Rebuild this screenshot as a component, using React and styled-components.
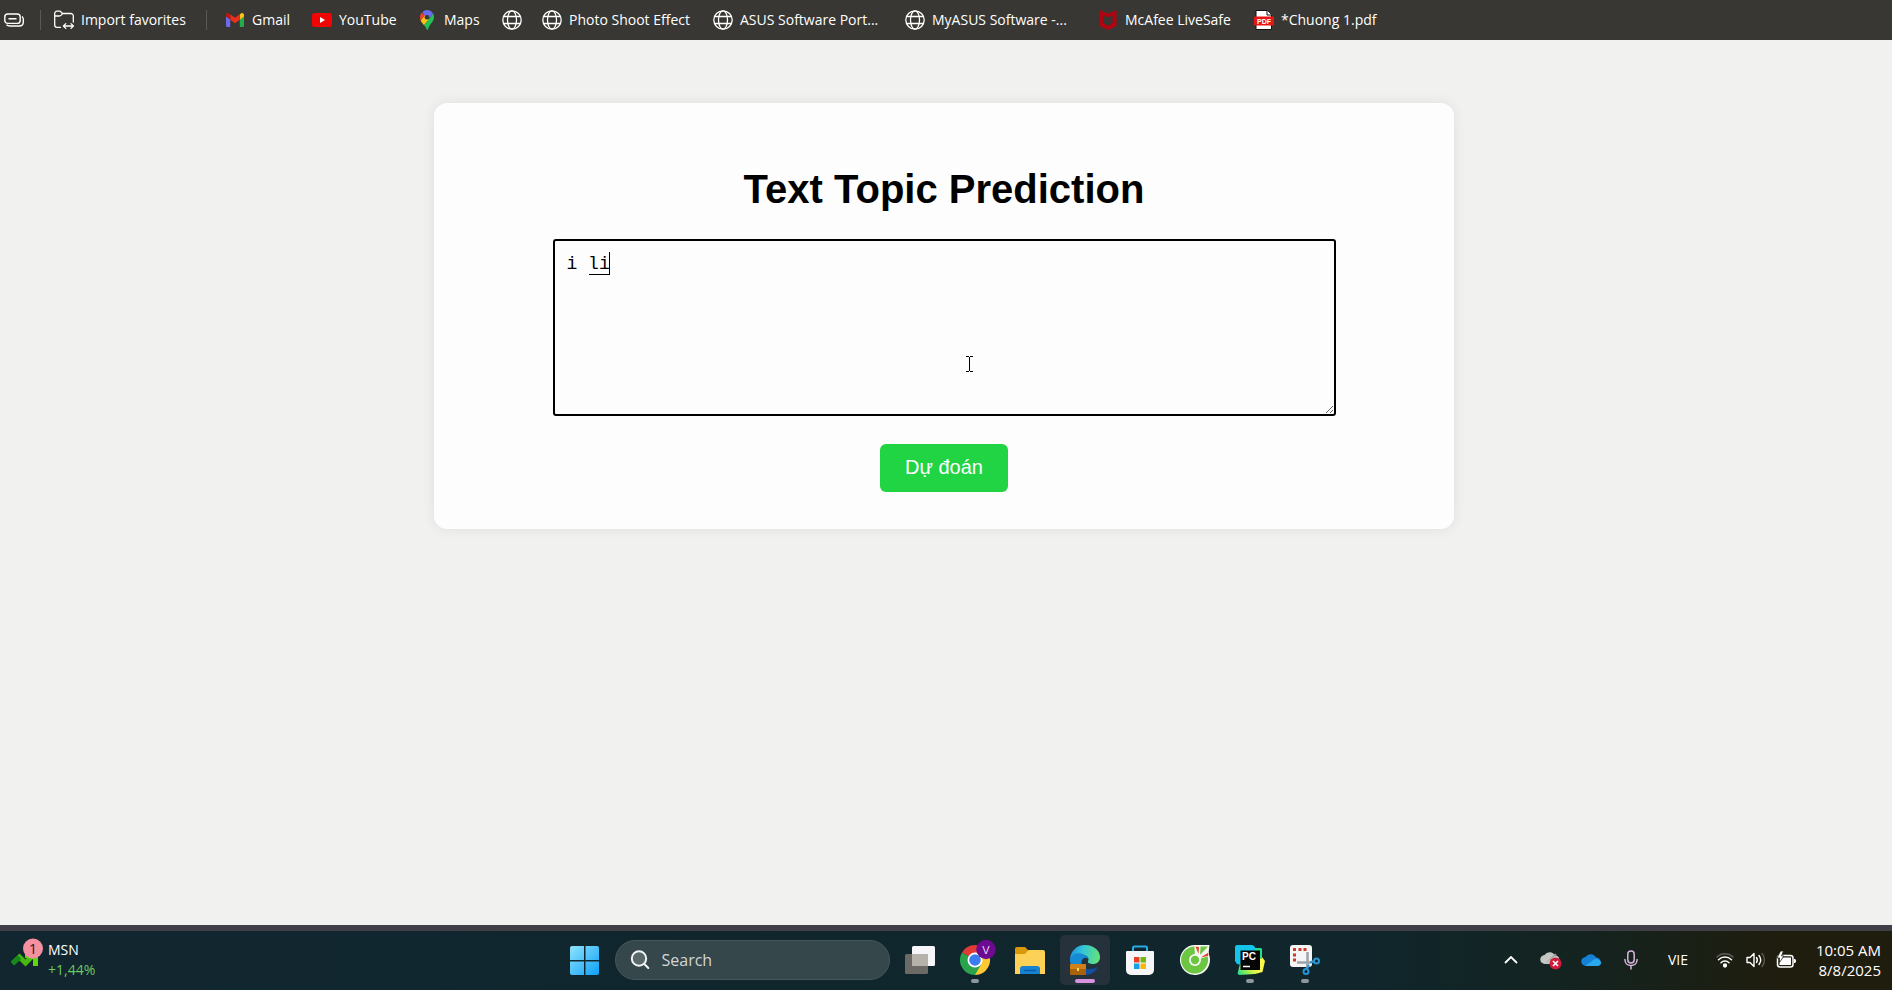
import React from 'react';
import styled, { createGlobalStyle } from 'styled-components';

const UI_FONT = '"Open Sans", "Noto Sans", sans-serif';

const GlobalStyle = createGlobalStyle`
  * { box-sizing: border-box; }
  body { margin: 0; background: #f1f1ef; font-family: "Liberation Sans", Arial, sans-serif; }
`;

const Screen = styled.div`
  min-height: 100vh;
  display: flex;
  flex-direction: column;
`;

/* Favorites bar */

const FavoritesBar = styled.nav`
  display: flex;
  align-items: center;
  height: 40px;
  flex-shrink: 0;
  padding-left: 4px;
  background: #383733;
  overflow: hidden;
`;

const Favorite = styled.a`
  display: flex;
  align-items: center;
  gap: 7px;
  flex: none;
  width: ${(p) => p.$width}px;
  color: #fff;
  font: 14px/20px ${UI_FONT};
  white-space: nowrap;
  text-decoration: none;

  svg { flex: none; }
`;

const BarDivider = styled.span`
  width: 1px;
  height: 20px;
  margin-right: ${(p) => p.$after}px;
  background: #5a5a56;
`;

/* Page */

const Page = styled.main`
  flex: 1;
  display: flex;
  flex-direction: column;
  align-items: center;
  padding: 63px 24px 24px;
`;

const Card = styled.form`
  display: flex;
  flex-direction: column;
  align-items: center;
  width: 100%;
  max-width: 1020px;
  padding: 63px 40px 37px;
  margin-right: 4px;
  border-radius: 13px;
  background: #fdfdfd;
  box-shadow: 0 0 13px rgba(0, 0, 40, 0.08);
`;

const Title = styled.h1`
  margin: 0 0 27px;
  color: #000;
  font-size: 40px;
  line-height: 46px;
`;

const Editor = styled.div`
  position: relative;
  width: 100%;
  max-width: 783px;
  height: 177px;
  margin-bottom: 28px;
`;

const TextInput = styled.textarea`
  display: block;
  width: 100%;
  height: 100%;
  padding: 11px 12px;
  border: 2px solid #000;
  border-radius: 3px;
  outline: none;
  background: transparent;
  color: #000;
  font: 18px/24px "Liberation Mono", monospace;
  caret-color: transparent;
  resize: vertical;
`;

const Composition = styled.span`
  position: absolute;
  top: 13px;
  left: 36px;
  width: 21px;
  height: 23px;
  border: solid #000;
  border-width: 0 1px 1px 0;
  pointer-events: none;
`;

const Pointer = styled.svg`
  position: absolute;
  top: 117px;
  left: 411px;
  pointer-events: none;
`;

const SubmitButton = styled.button`
  height: 48px;
  padding: 0 25px 2px;
  border: 0;
  border-radius: 6px;
  background: #20d444;
  color: #fff;
  font: 20px/24px "Liberation Sans", Arial, sans-serif;
`;

/* Taskbar */

const Taskbar = styled.footer`
  display: grid;
  grid-template-columns: 1fr auto 1fr;
  align-items: center;
  height: 65px;
  padding-bottom: 2px;
  border-top: 6px solid #403f48;
  background: linear-gradient(90deg, #11262f 0%, #10262c 72%, #14231f 84%, #1f1d0e 94%, #1f1d0e 100%);
  color: #fff;
  font: 14px/20px ${UI_FONT};
`;

const Widget = styled.button`
  display: flex;
  align-items: center;
  gap: 4px;
  justify-self: start;
  padding: 0 0 0 10px;
  border: 0;
  background: none;
  color: inherit;
  font: inherit;
  text-align: left;
`;

const Stack = styled.span`
  display: flex;
  flex-direction: column;
`;

const Change = styled.span`
  color: #6ccb5f;
`;

const Apps = styled.div`
  display: flex;
  align-items: center;
  gap: 5px;
  padding-right: 3px;
`;

const AppButton = styled.button`
  position: relative;
  display: flex;
  align-items: center;
  justify-content: center;
  width: 50px;
  height: 50px;
  padding: 0;
  border: 0;
  border-radius: 5px;
  background: ${(p) => (p.$active ? '#25313b' : 'none')};

  &::after {
    content: "";
    position: absolute;
    bottom: 2px;
    width: ${(p) => (p.$active ? 20 : 8)}px;
    height: 4px;
    border-radius: 2px;
    background: ${(p) => (p.$active ? '#d792e0' : '#8d979c')};
    display: ${(p) => (p.$running ? 'block' : 'none')};
  }
`;

const SearchBox = styled.label`
  display: flex;
  align-items: center;
  gap: 12px;
  width: 275px;
  height: 40px;
  padding: 0 14px;
  border: 1px solid #44575a;
  border-radius: 20px;
  background: #36474b;
`;

const SearchInput = styled.input`
  flex: 1;
  min-width: 0;
  padding: 0;
  border: 0;
  outline: none;
  background: none;
  color: #fff;
  font: 16px/24px ${UI_FONT};

  &::placeholder { color: #d2d6d6; opacity: 1; }
`;

const Tray = styled.div`
  display: flex;
  align-items: center;
  justify-self: end;
  padding-right: 11px;
`;

const TrayButton = styled.button`
  display: flex;
  align-items: center;
  justify-content: center;
  width: ${(p) => p.$width}px;
  height: 40px;
  padding: 0;
  border: 0;
  background: none;
  color: inherit;
  font: inherit;
`;

const Clock = styled.time`
  display: flex;
  flex-direction: column;
  align-items: flex-end;
  width: 76px;
  font-size: 15px;
  white-space: nowrap;
`;

/* Icons */

const TabsIcon = () => (
  <svg width="20" height="20" viewBox="0 0 20 20" fill="none" stroke="#fff" strokeWidth="1.4">
    <rect x="0.8" y="4" width="15.4" height="9.4" rx="3" />
    <path d="M4.500 8.700h8M18 6.500c1 .8 1.300 1.800 1.300 3V12c0 2.600-1.600 4-4 4H6c-1.600 0-2.700-.4-3.500-1.200" />
  </svg>
);

const ImportIcon = () => (
  <svg width="20" height="20" viewBox="0 0 20 20" fill="none" stroke="#fff" strokeWidth="1.3" strokeLinecap="round" strokeLinejoin="round">
    <path d="M6.500 17.300H3A2.300 2.300 0 0 1 .7 15V3.500A2.300 2.300 0 0 1 3 1.200h3.200l2.300 2.300h8A2.500 2.500 0 0 1 19.300 6v6M.7 6h4.600c1 0 1.400-.3 2-.9l1.300-1.500" />
    <path d="M9.500 16h9.800M11.800 13.600 9.400 16l2.400 2.400M17 13.600l2.400 2.400-2.400 2.400" />
  </svg>
);

const GmailIcon = () => (
  <svg width="20" height="20" viewBox="0 0 20 20">
    <path d="M1 5.500 5.200 8.700V17H2.300A1.300 1.300 0 0 1 1 15.700z" fill="#6a6cf0" />
    <path d="M14.800 8.700 19 5.500v10.200a1.300 1.300 0 0 1-1.300 1.300h-2.900z" fill="#1fae4b" />
    <path d="M14.800 4.200 16 3.400c1.400-.9 3 0 3 1.700v1.400l-4.200 3.200z" fill="#fbc116" />
    <path d="M5.200 4.200 10 7.800l4.800-3.600v5.500L10 13.300 5.200 9.700z" fill="#e8301f" />
    <path d="M1 5.100c0-1.700 1.600-2.600 3-1.700l1.200.8v5.500L1 6.500z" fill="#b8180e" />
  </svg>
);

const YouTubeIcon = () => (
  <svg width="20" height="20" viewBox="0 0 20 20">
    <rect y="3" width="20" height="14" rx="2.500" fill="#f00505" />
    <path d="M8 7v6l5-3z" fill="#fff" />
  </svg>
);

const MapsIcon = () => (
  <svg width="20" height="20" viewBox="0 0 20 20">
    <path d="M5.500 1.800A7 7 0 0 1 12 .3a7 7 0 0 1 4.300 3.500l-4.500 5.300L7 5.300z" fill="#6a6cf0" />
    <path d="M4.600 2.400 8 5.500l-4.300 5.300C2.600 8.200 2.700 4.800 4.600 2.400z" fill="#e8442f" />
    <path d="m3.600 10.700 4.200-5.100 4.200 3.600-5 6.100c-1.100-1.600-2.500-3-3.400-4.600z" fill="#fbc116" />
    <path d="M16.300 3.800c1.100 2.300.9 5-.4 7.200-1.300 2.300-3.200 3.800-4.300 6.700-.4 1.100-.6 2.300-1.300 2.300s-.8-1.200-1.300-2.200c-.4-1-1.100-1.800-2-2.500z" fill="#22c257" />
    <circle cx="10" cy="7.200" r="2.300" fill="#383733" />
  </svg>
);

const GlobeIcon = () => (
  <svg width="20" height="20" viewBox="0 0 20 20" fill="none" stroke="#fff" strokeWidth="1.300">
    <circle cx="10" cy="10" r="9.200" />
    <ellipse cx="10" cy="10" rx="4.500" ry="9.200" />
    <path d="M1.600 6.500h16.800M1.600 13.500h16.800" />
  </svg>
);

const McAfeeIcon = () => (
  <svg width="20" height="20" viewBox="0 0 20 20">
    <path d="m1.500 0 8.500 3.800L18.500 0v16L10 20l-8.500-4z" fill="#b00410" />
    <path d="M5.500 5.300 10 7.500l4.500-2.200v8L10 15.700l-4.500-2.400z" fill="#383733" />
  </svg>
);

const PdfIcon = () => (
  <svg width="20" height="20" viewBox="0 0 20 20">
    <path d="M2 .5h11.500l4 4v15H2z" fill="#fff" stroke="#111" />
    <path d="M13 .5V5h4.500" fill="#fff" stroke="#111" />
    <rect y="6.500" width="20" height="9" rx="1" fill="#e81512" />
    <text x="10" y="13.500" fontSize="7" fontWeight="700" textAnchor="middle" fill="#fff" fontFamily="Liberation Sans, sans-serif">PDF</text>
  </svg>
);

const StockIcon = () => (
  <svg width="34" height="44" viewBox="0 0 34 44">
    <path d="m2.500 25.500 7-6.500 6 6 8-8" fill="none" stroke="#46b80e" strokeWidth="5" />
    <path d="m2.500 25.500 7-6.500" stroke="#158a1a" strokeWidth="5" />
    <path d="M15 15.500h13V28h-5v-7l-8-1z" fill="#5fd60c" />
    <circle cx="23" cy="10.500" r="10" fill="#f590a0" />
    <text x="23" y="15.500" fontSize="14" textAnchor="middle" fill="#251820" fontFamily="Open Sans, sans-serif">1</text>
  </svg>
);

const StartIcon = () => (
  <svg width="30" height="30" viewBox="0 0 30 30">
    <defs>
      <linearGradient id="start" x2="1" y2="1">
        <stop stopColor="#8fe4ff" />
        <stop offset="1" stopColor="#0c9ff5" />
      </linearGradient>
    </defs>
    <path d="M2 1h12v14H0V3a2 2 0 0 1 2-2zM15.500 1H27a2 2 0 0 1 2 2v12H15.500zM0 16.500h14V30H2a2 2 0 0 1-2-2zM15.500 16.500H29V28a2 2 0 0 1-2 2H15.500z" fill="url(#start)" />
  </svg>
);

const SearchIcon = () => (
  <svg width="20" height="20" viewBox="0 0 20 20" fill="none" stroke="#f2f3f3" strokeWidth="2" strokeLinecap="round">
    <circle cx="9" cy="8.500" r="7.200" fill="#59696a" />
    <path d="m14.300 14 4 4" />
  </svg>
);

const TaskViewIcon = () => (
  <svg width="30" height="30" viewBox="0 0 30 30">
    <rect y="9" width="23" height="20" rx="1.500" fill="#6c6a66" />
    <rect x="7" y="1" width="23" height="20" rx="1.500" fill="#f6f6f8" />
    <path d="M7 9h16v12H7z" fill="#b4b2aa" />
  </svg>
);

const ChromeIcon = () => (
  <svg width="42" height="42" viewBox="0 0 42 42">
    <path d="M21 21 8 13.500a15 15 0 0 1 26 0H21z" fill="#e23a34" />
    <path d="M21 21v-7.500h13A15 15 0 0 1 21 36z" fill="#fcc934" />
    <path d="m21 21 6.500 3.700L21 36A15 15 0 0 1 8 13.500z" fill="#2aa34c" />
    <circle cx="21" cy="21" r="7.500" fill="#fff" />
    <circle cx="21" cy="21" r="5.800" fill="#3b7df0" />
    <circle cx="32" cy="10.500" r="9.700" fill="#6d0a92" />
    <text x="32" y="14.500" fontSize="11" textAnchor="middle" fill="#e8d8ee" fontFamily="Liberation Sans, sans-serif">V</text>
  </svg>
);

const FolderIcon = () => (
  <svg width="30" height="30" viewBox="0 0 30 30">
    <path d="M0 4a2 2 0 0 1 2-2h8l3 3v8H0z" fill="#d9980a" />
    <path d="M0 9h10l3.500-4H28a2 2 0 0 1 2 2v22H0z" fill="#fdd155" />
    <path d="M5 29v-5a3 3 0 0 1 3-3h14a3 3 0 0 1 3 3v5z" fill="#1781d2" />
    <path d="M9 25.500h12" stroke="#0a5ca6" strokeWidth="1.500" />
  </svg>
);

const EdgeIcon = () => (
  <svg width="30" height="30" viewBox="0 0 30 30">
    <defs>
      <linearGradient id="edge" x1="0" y1=".4" x2="1" y2=".5">
        <stop stopColor="#2191dc" />
        <stop offset=".4" stopColor="#32c4d8" />
        <stop offset="1" stopColor="#66e37a" />
      </linearGradient>
    </defs>
    <path d="M10 16c0 5 5 9 11 8 3-.3 5-1 6.500-2.200C26 27 20.500 30 15 30 10 30 6 25 10 16z" fill="#124fa0" />
    <path d="M0 15C0 6 7 0 15 0c9 0 15 6 15 12 0 4.500-3 7-7 7-3 0-5.500-1-5-2.500C20 12 16 10 12 10 6 10 1 13.500 0 18z" fill="url(#edge)" />
    <path d="M0 16C1 10 6 7.500 11 8.500c4 1 7 3 7.500 5.500-4-3-7.500 0-7 5v5H2z" fill="#168ad5" />
    <rect y="19" width="16" height="11" rx="1" fill="#a9620a" />
    <path d="M0 20a1 1 0 0 1 1-1h14a1 1 0 0 1 1 1v4H0z" fill="#cf8118" />
    <path d="M7 23h2v3H7z" fill="#ffd25c" />
  </svg>
);

const StoreIcon = () => (
  <svg width="30" height="30" viewBox="0 0 30 30">
    <path d="M8 7V3a1.500 1.500 0 0 1 1.500-1.500h11A1.500 1.500 0 0 1 22 3v4" fill="none" stroke="#28a9e8" strokeWidth="2" />
    <path d="M2 6h26a1 1 0 0 1 1 1v18a5 5 0 0 1-5 5H6a5 5 0 0 1-5-5V7a1 1 0 0 1 1-1z" fill="#f6f6f8" />
    <path d="M9 12h5.500v5.500H9z" fill="#e6402a" />
    <path d="M15.500 12H21v5.500h-5.500z" fill="#72b80e" />
    <path d="M9 18.500h5.500V24H9z" fill="#16a0e8" />
    <path d="M15.500 18.500H21V24h-5.500z" fill="#fbb80c" />
  </svg>
);

const CocCocIcon = () => (
  <svg width="30" height="30" viewBox="0 0 30 30">
    <path d="M15 0h14.500l-1 8.500A15 15 0 1 1 15 0z" fill="#f6faf2" />
    <path d="M14.500 1.500 15 15l12.500-4A13.500 13.500 0 1 1 14.500 1.500z" fill="#6cc642" />
    <path d="M15 1h3l1 8-3 2zM29 7v4l-10 3 1-3z" fill="#f6faf2" />
    <path d="m15.500 1.500 3.500.5-.5 7zM28.500 7.500l-.5 3.500-7.500 1.500z" fill="#e8402f" />
    <path d="M20.500 1.500H28L20 10z" fill="#6cc642" />
    <circle cx="15" cy="15" r="6" fill="#f6faf2" />
    <circle cx="15" cy="15" r="4.200" fill="#6cc642" />
  </svg>
);

const PyCharmIcon = () => (
  <svg width="30" height="30" viewBox="0 0 30 30">
    <defs>
      <linearGradient id="pycharm" x1="0" y1="1" x2="1" y2=".5">
        <stop stopColor="#10d890" />
        <stop offset=".4" stopColor="#a8f04c" />
        <stop offset=".7" stopColor="#f8f84a" />
      </linearGradient>
    </defs>
    <path d="M8 19h-3l-2.500 9.500L4 30l16-1 7.500-2 2.500-11-3-4z" fill="url(#pycharm)" />
    <path d="M17 3h9l1 1v10l-9-3z" fill="#20e088" />
    <path d="M1.500 0h16L20 2v5L6 20l-4-1-2-3V1.500z" fill="#14c4ea" />
    <rect x="5.500" y="5.500" width="19.500" height="19.500" fill="#050505" />
    <text x="7" y="15" fontSize="10" fontWeight="700" fill="#fff" fontFamily="Liberation Sans, sans-serif">PC</text>
    <path d="M8 21.500h7" stroke="#fff" strokeWidth="1.500" />
  </svg>
);

const SnipIcon = () => (
  <svg width="30" height="30" viewBox="0 0 30 30">
    <rect width="22" height="22" rx="3" fill="#f5f5f7" />
    <path d="M3 4.500h3M8.500 4.500h3M13.500 4.500h3M4.500 8.500v3M4.500 13.500v3" stroke="#cf3a22" strokeWidth="3" />
    <path d="M17.500 7v12L17 23M7 17.500h13l3-1" fill="none" stroke="#9aa4ac" strokeWidth="2.500" />
    <g fill="none" stroke="#2796d6" strokeWidth="2">
      <circle cx="16" cy="26.500" r="2.500" />
      <circle cx="26.500" cy="16" r="2.500" />
      <path d="m17 24 2-4M24 16.500l-4 1" />
    </g>
  </svg>
);

const ChevronIcon = () => (
  <svg width="14" height="8" viewBox="0 0 14 8" fill="none" stroke="#fff" strokeWidth="1.800">
    <path d="m1 7 6-6 6 6" />
  </svg>
);

const CLOUD = 'M5 13a4.500 4.500 0 0 1-.5-9A6 6 0 0 1 15 4.500 4.300 4.300 0 0 1 16 13z';

const CloudErrorIcon = () => (
  <svg width="22" height="20" viewBox="0 0 22 20">
    <path d={CLOUD} transform="translate(0 1)" fill="#c4c6c4" />
    <path d="M5 14 14 6.500l3-1.500-2-1.500" fill="#9c9f9e" />
    <circle cx="15.500" cy="13.500" r="6" fill="#d01c3c" />
    <path d="m13 11 5 5m0-5-5 5" stroke="#fff" strokeWidth="1.600" />
  </svg>
);

const OneDriveIcon = () => (
  <svg width="20" height="14" viewBox="0 0 20 14">
    <path d={CLOUD} fill="#1480d6" />
    <path d="M4 13 14 5.800c3 .2 6 1.200 6 4.200 0 2-1.500 3-3.500 3z" fill="#28a8ee" />
  </svg>
);

const MicIcon = () => (
  <svg width="14" height="20" viewBox="0 0 14 20" fill="none" stroke="#d8b4dc" strokeWidth="1.500" strokeLinecap="round">
    <rect x="3.800" y="1" width="6.400" height="12" rx="3.200" />
    <path d="M.9 9.500c0 3.800 2.700 6 6.100 6s6.100-2.200 6.100-6M7 16v3" />
  </svg>
);

const WifiIcon = () => (
  <svg width="18" height="16" viewBox="0 0 18 16" fill="none" stroke="#fff" strokeWidth="1.500" strokeLinecap="round">
    <path d="M1 5a11.500 11.500 0 0 1 16 0" stroke="#5c5b54" />
    <path d="M2.500 7.700a9.300 9.300 0 0 1 13 0M5 10.700a5.700 5.700 0 0 1 8 0" />
    <circle cx="9" cy="13.500" r="1.400" fill="#fff" />
  </svg>
);

const VolumeIcon = () => (
  <svg width="20" height="16" viewBox="0 0 20 16" fill="none" stroke="#fff" strokeWidth="1.400" strokeLinecap="round" strokeLinejoin="round">
    <path d="M1 5.500h3l4-4v13l-4-4H1z" />
    <path d="M10.500 5.500c1 1.500 1 3.500 0 5M13 3.500c2 2.600 2 6.400 0 9" />
    <path d="M16 1.500c3.200 3.700 3.200 9.300 0 13" stroke="#5c5b54" />
  </svg>
);

const BatteryIcon = () => (
  <svg width="20" height="18" viewBox="0 0 20 18">
    <rect x="1.500" y="4.500" width="15.500" height="11.500" rx="2.500" fill="none" stroke="#fff" strokeWidth="1.500" />
    <path d="M3.500 6.500H15V14H3.500z" fill="#fff" />
    <path d="M18 8c1.500 0 2 .6 2 2s-.5 2-2 2z" fill="#fff" />
    <path d="M4.500 0 1 7h2.500v4.500L8 5H5.500l2-5z" fill="#fff" stroke="#1f1d0e" strokeWidth=".8" />
  </svg>
);

const FAVORITES = [
  { icon: GmailIcon, label: 'Gmail', width: 87 },
  { icon: YouTubeIcon, label: 'YouTube', width: 105 },
  { icon: MapsIcon, label: 'Maps', width: 85 },
  { icon: GlobeIcon, name: 'Website', width: 40 },
  { icon: GlobeIcon, label: 'Photo Shoot Effect', width: 171 },
  { icon: GlobeIcon, label: 'ASUS Software Port...', width: 192 },
  { icon: GlobeIcon, label: 'MyASUS Software -...', width: 193 },
  { icon: McAfeeIcon, label: 'McAfee LiveSafe', width: 156 },
  { icon: PdfIcon, label: '*Chuong 1.pdf', width: 130 },
];

const APPS = [
  { icon: TaskViewIcon, name: 'Task view' },
  { icon: ChromeIcon, name: 'Chrome', running: true },
  { icon: FolderIcon, name: 'File Explorer' },
  { icon: EdgeIcon, name: 'Edge', running: true, active: true },
  { icon: StoreIcon, name: 'Microsoft Store' },
  { icon: CocCocIcon, name: 'Coc Coc' },
  { icon: PyCharmIcon, name: 'PyCharm', running: true },
  { icon: SnipIcon, name: 'Snipping Tool', running: true },
];

export default function App() {
  return (
    <Screen>
      <GlobalStyle />
      <FavoritesBar aria-label="Favorites">
        <Favorite href="#" $width={36} aria-label="Tab actions"><TabsIcon /></Favorite>
        <BarDivider $after={13} />
        <Favorite href="#" $width={152}><ImportIcon />Import favorites</Favorite>
        <BarDivider $after={18} />
        {FAVORITES.map(({ icon: Icon, label, name, width }) => (
          <Favorite key={label || name} href="#" $width={width} aria-label={name}>
            <Icon />{label}
          </Favorite>
        ))}
      </FavoritesBar>

      <Page>
        <Card onSubmit={(e) => e.preventDefault()}>
          <Title>Text Topic Prediction</Title>
          <Editor>
            <TextInput aria-label="Text" defaultValue="i li" spellCheck={false} />
            <Composition />
            <Pointer width="10" height="16" viewBox="0 0 10 16" fill="none" stroke="#000" shapeRendering="crispEdges">
              <path d="M2 .5h3M6 .5h3M5.500 1v14M2 15.500h3M6 15.500h3" />
            </Pointer>
          </Editor>
          <SubmitButton type="submit">Dự đoán</SubmitButton>
        </Card>
      </Page>

      <Taskbar>
        <Widget>
          <StockIcon />
          <Stack>
            <span>MSN</span>
            <Change>+1,44%</Change>
          </Stack>
        </Widget>
        <Apps>
          <AppButton aria-label="Start"><StartIcon /></AppButton>
          <SearchBox>
            <SearchIcon />
            <SearchInput type="text" placeholder="Search" aria-label="Search" />
          </SearchBox>
          {APPS.map(({ icon: Icon, name, running, active }) => (
            <AppButton key={name} aria-label={name} $running={running} $active={active}>
              <Icon />
            </AppButton>
          ))}
        </Apps>
        <Tray>
          <TrayButton $width={40} aria-label="Show hidden icons"><ChevronIcon /></TrayButton>
          <TrayButton $width={40} aria-label="Sync error"><CloudErrorIcon /></TrayButton>
          <TrayButton $width={40} aria-label="OneDrive"><OneDriveIcon /></TrayButton>
          <TrayButton $width={40} aria-label="Microphone"><MicIcon /></TrayButton>
          <TrayButton $width={54}>VIE</TrayButton>
          <TrayButton $width={40} aria-label="Network"><WifiIcon /></TrayButton>
          <TrayButton $width={22} aria-label="Volume"><VolumeIcon /></TrayButton>
          <TrayButton $width={38} aria-label="Battery"><BatteryIcon /></TrayButton>
          <Clock>
            <span>10:05 AM</span>
            <span>8/8/2025</span>
          </Clock>
        </Tray>
      </Taskbar>
    </Screen>
  );
}
